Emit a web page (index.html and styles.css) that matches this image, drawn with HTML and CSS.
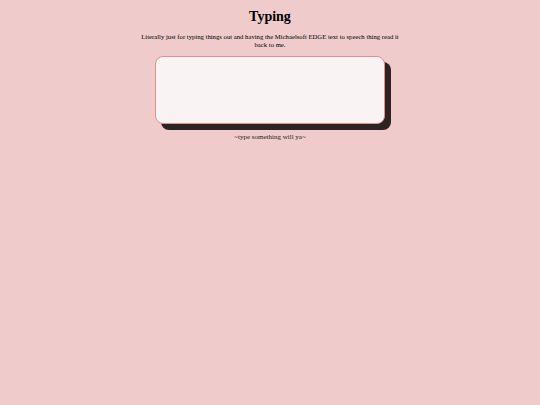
FILE: index.html
```html
<!DOCTYPE html>
<html>
<head>
<meta charset="utf-8">
<link rel="stylesheet" href="styles.css">
</head>
<body>
<main class="page">
  <h1 class="title">Typing</h1>
  <p class="intro">Literally just for typing things out and having the Michaelsoft EDGE text to speech thing read it back to me.</p>
  <div class="box"></div>
  <p class="caption">~type something will ya~</p>
</main>
</body>
</html>
```
FILE: styles.css
```css
html, body {
  margin: 0;
  padding: 0;
  background: #efcbcb;
  font-family: "Liberation Serif", "Times New Roman", serif;
  color: #000;
}
.page {
  display: flex;
  flex-direction: column;
  align-items: center;
  padding-top: 9px;
}
.title {
  margin: 0;
  font-size: 14px;
  line-height: 16px;
  font-weight: bold;
}
.intro {
  margin: 8px 0 0;
  width: 264px;
  font-size: 6.7px;
  line-height: 8px;
  text-align: center;
}
.box {
  margin-top: 7px;
  width: 228px;
  height: 66px;
  background: #faf3f3;
  border: 1px solid #e88c8c;
  border-radius: 8px;
  box-shadow: 6px 6px 0 #2e2323;
}
.caption {
  margin: 9px 0 0;
  font-size: 7px;
  line-height: 8px;
  color: #222;
}
```
